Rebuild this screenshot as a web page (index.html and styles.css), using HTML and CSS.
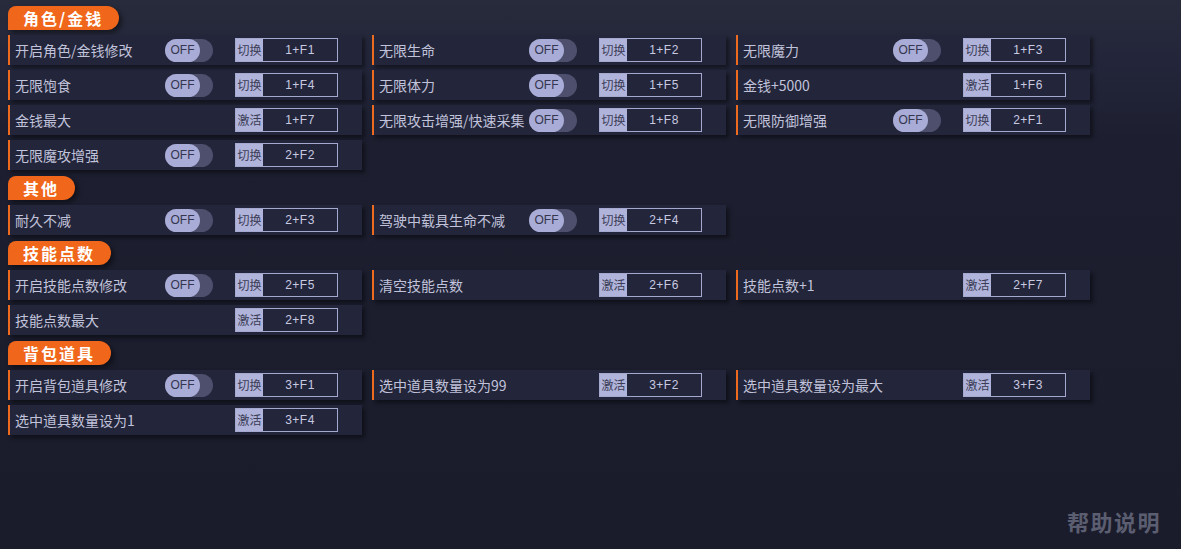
FILE: index.html
```html
<!DOCTYPE html>
<html lang="zh-CN">
<head>
    <meta charset="UTF-8">
    <meta name="viewport" content="width=device-width, initial-scale=1.0">
    <title>修改器</title>
    <link rel="stylesheet" href="styles.css">
</head>
<body>
    <div class="page">
        <div class="section">
            <div class="title">角色/金钱</div>
            <div class="grid">
                <div class="row"><span class="label">开启角色/金钱修改</span><span class="toggle"><span class="knob">OFF</span></span><span class="key"><span class="act">切换</span><span class="hot">1+F1</span></span></div>
                <div class="row"><span class="label">无限生命</span><span class="toggle"><span class="knob">OFF</span></span><span class="key"><span class="act">切换</span><span class="hot">1+F2</span></span></div>
                <div class="row"><span class="label">无限魔力</span><span class="toggle"><span class="knob">OFF</span></span><span class="key"><span class="act">切换</span><span class="hot">1+F3</span></span></div>
                <div class="row"><span class="label">无限饱食</span><span class="toggle"><span class="knob">OFF</span></span><span class="key"><span class="act">切换</span><span class="hot">1+F4</span></span></div>
                <div class="row"><span class="label">无限体力</span><span class="toggle"><span class="knob">OFF</span></span><span class="key"><span class="act">切换</span><span class="hot">1+F5</span></span></div>
                <div class="row"><span class="label">金钱+5000</span><span class="blank"></span><span class="key"><span class="act">激活</span><span class="hot">1+F6</span></span></div>
                <div class="row"><span class="label">金钱最大</span><span class="blank"></span><span class="key"><span class="act">激活</span><span class="hot">1+F7</span></span></div>
                <div class="row"><span class="label">无限攻击增强/快速采集</span><span class="toggle"><span class="knob">OFF</span></span><span class="key"><span class="act">切换</span><span class="hot">1+F8</span></span></div>
                <div class="row"><span class="label">无限防御增强</span><span class="toggle"><span class="knob">OFF</span></span><span class="key"><span class="act">切换</span><span class="hot">2+F1</span></span></div>
                <div class="row"><span class="label">无限魔攻增强</span><span class="toggle"><span class="knob">OFF</span></span><span class="key"><span class="act">切换</span><span class="hot">2+F2</span></span></div>
            </div>
        </div>

        <div class="section">
            <div class="title">其他</div>
            <div class="grid">
                <div class="row"><span class="label">耐久不减</span><span class="toggle"><span class="knob">OFF</span></span><span class="key"><span class="act">切换</span><span class="hot">2+F3</span></span></div>
                <div class="row"><span class="label">驾驶中载具生命不减</span><span class="toggle"><span class="knob">OFF</span></span><span class="key"><span class="act">切换</span><span class="hot">2+F4</span></span></div>
            </div>
        </div>

        <div class="section">
            <div class="title">技能点数</div>
            <div class="grid">
                <div class="row"><span class="label">开启技能点数修改</span><span class="toggle"><span class="knob">OFF</span></span><span class="key"><span class="act">切换</span><span class="hot">2+F5</span></span></div>
                <div class="row"><span class="label">清空技能点数</span><span class="blank"></span><span class="key"><span class="act">激活</span><span class="hot">2+F6</span></span></div>
                <div class="row"><span class="label">技能点数+1</span><span class="blank"></span><span class="key"><span class="act">激活</span><span class="hot">2+F7</span></span></div>
                <div class="row"><span class="label">技能点数最大</span><span class="blank"></span><span class="key"><span class="act">激活</span><span class="hot">2+F8</span></span></div>
            </div>
        </div>

        <div class="section">
            <div class="title">背包道具</div>
            <div class="grid">
                <div class="row"><span class="label">开启背包道具修改</span><span class="toggle"><span class="knob">OFF</span></span><span class="key"><span class="act">切换</span><span class="hot">3+F1</span></span></div>
                <div class="row"><span class="label">选中道具数量设为99</span><span class="blank"></span><span class="key"><span class="act">激活</span><span class="hot">3+F2</span></span></div>
                <div class="row"><span class="label">选中道具数量设为最大</span><span class="blank"></span><span class="key"><span class="act">激活</span><span class="hot">3+F3</span></span></div>
                <div class="row"><span class="label">选中道具数量设为1</span><span class="blank"></span><span class="key"><span class="act">激活</span><span class="hot">3+F4</span></span></div>
            </div>
        </div>

        <div class="help">帮助说明</div>
    </div>
</body>
</html>
```

FILE: styles.css
```css
* {
    box-sizing: border-box;
}

body {
    margin: 0;
    width: 1181px;
    height: 549px;
    overflow: hidden;
    background: linear-gradient(180deg, #282b3b 0px, #23263a 60px, #1d1f30 140px, #1a1c2b 549px);
    font-family: "Noto Sans CJK SC", "Noto Sans", sans-serif;
    color: #c3c5dc;
}

.page {
    position: relative;
    height: 549px;
    padding: 6px 0 0 8px;
}

.section {
    margin-bottom: 6px;
}

.title {
    display: inline-block;
    height: 24px;
    line-height: 24px;
    padding: 0 16px 0 15px;
    background: #f0661a;
    color: #fff;
    font-weight: bold;
    font-size: 16px;
    letter-spacing: 2px;
    border-radius: 8px 12px 12px 0;
    box-shadow: 3px 3px 5px rgba(0, 0, 0, 0.45);
    margin-bottom: 5px;
}

.grid {
    display: grid;
    grid-template-columns: 354px 354px 354px;
    column-gap: 10px;
    row-gap: 5px;
}

.row {
    display: flex;
    align-items: center;
    height: 30px;
    background: #23253a;
    border-left: 2px solid #ee6a1e;
    padding-left: 5px;
    box-shadow: 3px 3px 4px rgba(0, 0, 0, 0.45);
}

.label {
    width: 150px;
    flex: none;
    font-size: 14px;
    white-space: nowrap;
    color: #c1c3da;
}

.toggle,
.blank {
    width: 48px;
    height: 23px;
    flex: none;
    margin-right: 22px;
}

.toggle {
    display: flex;
    background: #4d4f6d;
    border-radius: 12px;
}

.knob {
    width: 35px;
    height: 23px;
    border-radius: 12px;
    background: #a9acd6;
    color: #34364f;
    font-family: "Liberation Sans", Arial, sans-serif;
    font-size: 12px;
    line-height: 23px;
    text-align: center;
}

.key {
    display: flex;
    width: 103px;
    height: 24px;
    border: 1px solid #a6a9cf;
}

.act {
    width: 27px;
    background: #b0b3da;
    color: #3b3d56;
    font-size: 12px;
    line-height: 22px;
    text-align: center;
}

.hot {
    flex: 1;
    text-align: center;
    font-family: "Liberation Sans", Arial, sans-serif;
    font-size: 12px;
    line-height: 22px;
    color: #c8cae2;
    letter-spacing: 0.5px;
}

.help {
    position: absolute;
    right: 20px;
    bottom: 12px;
    font-size: 22px;
    font-weight: bold;
    color: #5b5e70;
    letter-spacing: 1.5px;
}
```
